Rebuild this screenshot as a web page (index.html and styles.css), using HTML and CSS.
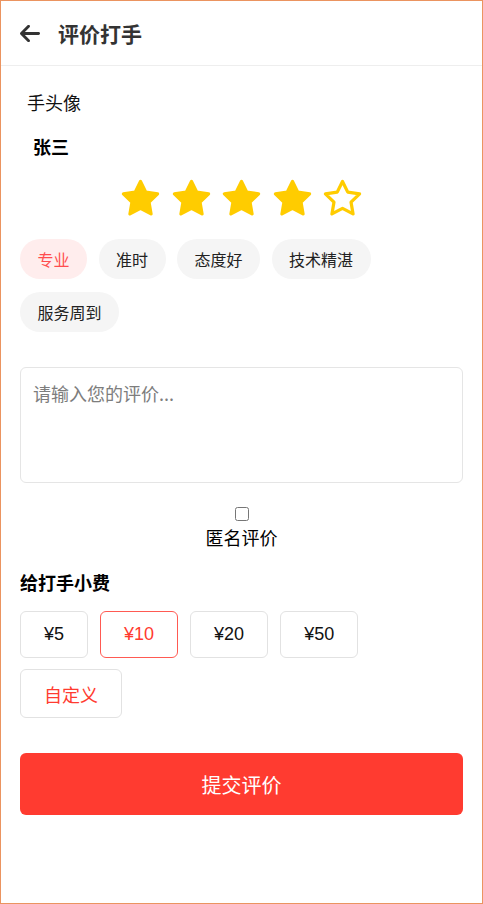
FILE: index.html
```html
<!DOCTYPE html>
<html lang="zh-CN">
<head>
<meta charset="utf-8">
<title>评价打手</title>
<link rel="stylesheet" href="styles.css">
</head>
<body>
<div class="page">
  <header class="header">
    <svg class="back" viewBox="0 0 448 512" width="20" height="23" aria-hidden="true">
      <path fill="#333" d="M9.4 233.4c-12.5 12.5-12.5 32.8 0 45.3l160 160c12.5 12.5 32.8 12.5 45.3 0s12.5-32.8 0-45.3L109.3 288 416 288c17.7 0 32-14.3 32-32s-14.3-32-32-32l-306.7 0L214.6 118.6c12.5-12.5 12.5-32.8 0-45.3s-32.8-12.5-45.3 0l-160 160z"/>
    </svg>
    <h1 class="title">评价打手</h1>
  </header>

  <main class="main">
    <div class="avatar-alt">手头像</div>
    <div class="name">张三</div>

    <div class="stars">
      <svg class="star" viewBox="0 0 24 24"><polygon class="full" points="12,2 15.09,8.26 22,9.27 17,14.14 18.18,21.02 12,17.77 5.82,21.02 7,14.14 2,9.27 8.91,8.26"/></svg>
      <svg class="star" viewBox="0 0 24 24"><polygon class="full" points="12,2 15.09,8.26 22,9.27 17,14.14 18.18,21.02 12,17.77 5.82,21.02 7,14.14 2,9.27 8.91,8.26"/></svg>
      <svg class="star" viewBox="0 0 24 24"><polygon class="full" points="12,2 15.09,8.26 22,9.27 17,14.14 18.18,21.02 12,17.77 5.82,21.02 7,14.14 2,9.27 8.91,8.26"/></svg>
      <svg class="star" viewBox="0 0 24 24"><polygon class="full" points="12,2 15.09,8.26 22,9.27 17,14.14 18.18,21.02 12,17.77 5.82,21.02 7,14.14 2,9.27 8.91,8.26"/></svg>
      <svg class="star" viewBox="0 0 24 24"><polygon class="empty" points="12,2 15.09,8.26 22,9.27 17,14.14 18.18,21.02 12,17.77 5.82,21.02 7,14.14 2,9.27 8.91,8.26"/></svg>
    </div>

    <div class="tags">
      <span class="tag active">专业</span>
      <span class="tag">准时</span>
      <span class="tag">态度好</span>
      <span class="tag">技术精湛</span>
      <span class="tag">服务周到</span>
    </div>

    <textarea class="comment" placeholder="请输入您的评价..."></textarea>

    <label class="anon">
      <input type="checkbox" class="anon-box">
      <span class="anon-text">匿名评价</span>
    </label>

    <h2 class="tip-title">给打手小费</h2>
    <div class="tips">
      <button class="tip">¥5</button>
      <button class="tip selected">¥10</button>
      <button class="tip">¥20</button>
      <button class="tip">¥50</button>
      <button class="tip custom">自定义</button>
    </div>

    <button class="submit">提交评价</button>
  </main>
</div>
</body>
</html>
```

FILE: styles.css
```css
html, body {
  margin: 0;
  padding: 0;
  background: #fff;
}

body {
  font-family: "Noto Sans CJK SC", "Liberation Sans", sans-serif;
  color: #111;
}

.page {
  width: 483px;
  height: 904px;
  box-sizing: border-box;
  border: 1px solid #eb9460;
  background: #fff;
}

.header {
  height: 64px;
  display: flex;
  align-items: center;
  gap: 18px;
  padding-left: 19px;
  border-bottom: 1px solid #eeeeee;
}

.back {
  display: block;
  margin-top: 1px;
}

.title {
  margin: 0;
  font-size: 21px;
  line-height: 26px;
  font-weight: 700;
  color: #333;
}

.main {
  padding: 0 19px;
}

.avatar-alt {
  margin: 25px 0 0 7px;
  font-size: 18px;
  line-height: 22px;
  color: #111;
}

.name {
  margin: 21px 0 0 13px;
  font-size: 18px;
  line-height: 24px;
  font-weight: 700;
  color: #000;
}

.stars {
  display: flex;
  justify-content: center;
  gap: 9.5px;
  margin-top: 20px;
}

.star {
  display: block;
  width: 41px;
  height: 41px;
}

.star polygon {
  stroke: #ffcc00;
  stroke-width: 1.9;
  stroke-linejoin: round;
}

.star .full {
  fill: #ffcc00;
}

.star .empty {
  fill: none;
}

.tags {
  display: flex;
  flex-wrap: wrap;
  gap: 13px 11.5px;
  margin-top: 20px;
}

.tag {
  height: 40px;
  padding: 0 17.5px;
  border-radius: 20px;
  background: #f5f5f5;
  font-size: 16px;
  line-height: 40px;
  color: #222;
}

.tag.active {
  background: #ffeded;
  color: #ff4d4f;
}

.comment {
  display: block;
  box-sizing: border-box;
  width: 100%;
  height: 116px;
  margin: 35px 0 0;
  padding: 12px;
  border: 1px solid #e5e5e5;
  border-radius: 6px;
  resize: none;
  font-family: "Noto Sans CJK SC", sans-serif;
  font-size: 18px;
  line-height: 26px;
  color: #111;
}

.comment::placeholder {
  color: #7d7d7d;
}

.anon {
  display: flex;
  flex-direction: column;
  align-items: center;
}

.anon-box {
  width: 14px;
  height: 14px;
  margin: 24px 0 0;
}

.anon-text {
  margin-top: 4px;
  font-size: 18px;
  line-height: 24px;
  color: #000;
}

.tip-title {
  margin: 21px 0 0;
  font-size: 18px;
  line-height: 24px;
  font-weight: 700;
  color: #000;
}

.tips {
  display: flex;
  flex-wrap: wrap;
  gap: 11px 12px;
  margin-top: 17px;
  width: 360px;
}

.tip {
  height: 47px;
  padding: 0 23px;
  border: 1px solid #e2e2e2;
  border-radius: 6px;
  background: #fff;
  font-family: "Liberation Sans", "Noto Sans CJK SC", sans-serif;
  font-size: 18px;
  color: #111;
}

.tip.selected {
  border-color: #ff5a52;
  color: #ff3b30;
}

.tip.custom {
  height: 49px;
  font-family: "Noto Sans CJK SC", sans-serif;
  color: #ff3b30;
}

.submit {
  display: block;
  width: 100%;
  height: 62px;
  margin-top: 35px;
  border: none;
  border-radius: 6px;
  background: #ff3b30;
  color: #fff;
  font-family: "Noto Sans CJK SC", sans-serif;
  font-size: 20px;
}
```
